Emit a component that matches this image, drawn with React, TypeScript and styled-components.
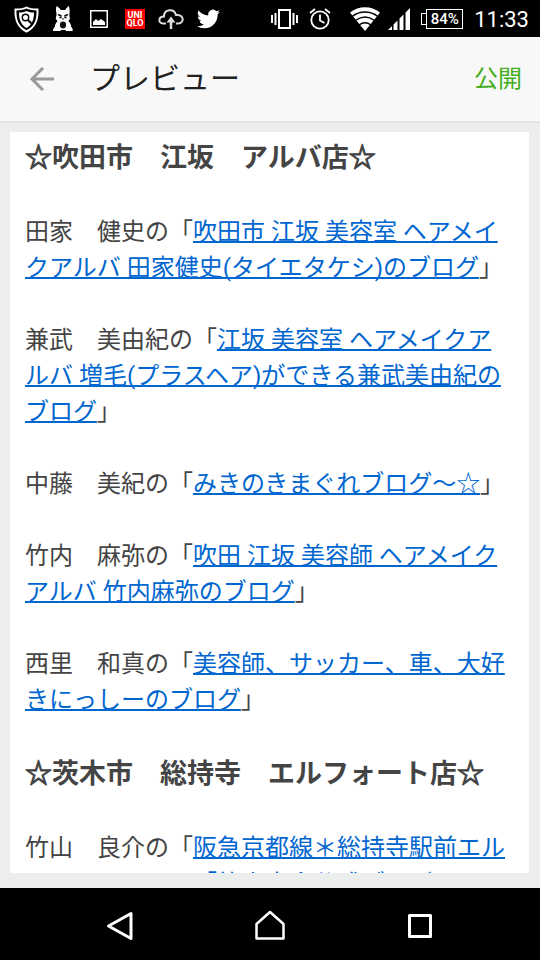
import React from 'react';
import styled, { createGlobalStyle } from 'styled-components';

const Global = createGlobalStyle`
  * { box-sizing: border-box; }
  body { margin: 0; background: #ebeeed; font-family: Roboto, "Noto Sans CJK JP", sans-serif; }
`;

const Screen = styled.div`
  display: flex;
  flex-direction: column;
  height: 100vh;
  background: #ebeeed;
`;

const StatusBar = styled.div`
  display: flex;
  flex: none;
  align-items: center;
  justify-content: space-between;
  height: 37px;
  padding: 0 11px 0 13px;
  background: #000;
  color: #fff;
`;

const Group = styled.div<{ $gap: number }>`
  display: flex;
  align-items: center;
  gap: ${(p) => p.$gap}px;
  svg { display: block; }
`;

const BrandTile = styled.span`
  width: 20px;
  height: 20px;
  padding-top: 2px;
  background: #f00;
  font: 700 9px/8px Roboto, sans-serif;
  text-align: center;
`;

const Battery = styled.span`
  display: flex;
  align-items: center;
  &::before {
    content: "";
    width: 4px;
    height: 10px;
    border: 1px solid #fff;
    border-right: 0;
  }
  span {
    width: 37px;
    height: 20px;
    border: 1px solid #fff;
    font: 500 15px/19px Roboto, sans-serif;
    text-align: center;
  }
`;

const Clock = styled.time`
  padding-top: 2px;
  font: 22px/26px Roboto, sans-serif;
`;

const AppBar = styled.header`
  display: flex;
  flex: none;
  align-items: center;
  height: 86px;
  padding: 0 18px 0 28px;
  background: #f8f8f8;
  border-bottom: 2px solid #e2e5e4;
`;

const Title = styled.h1`
  flex: 1;
  margin: 0 0 0 34px;
  font-size: 30px;
  font-weight: 400;
  line-height: 40px;
  color: #212121;
`;

const IconButton = styled.button`
  display: flex;
  padding: 0;
  border: 0;
  background: none;
  color: #999;
`;

const Publish = styled.button`
  padding: 0;
  border: 0;
  background: none;
  font: 24px/36px Roboto, "Noto Sans CJK JP", sans-serif;
  color: #43ae20;
`;

const Preview = styled.main`
  flex: 1;
  min-height: 0;
  overflow: hidden;
  margin: 9px 11px 15px 10px;
  padding: 6px 15px 0;
  background: #fff;
  color: #444;
`;

const ShopName = styled.h2`
  margin: 0 0 36px;
  font-size: 27px;
  font-weight: 700;
  line-height: 40px;
`;

const Star = styled.span`
  -webkit-text-stroke: 1px currentColor;
`;

const Entry = styled.p`
  margin: 0 0 36px;
  font-size: 24px;
  line-height: 36px;
  text-spacing-trim: space-all;
`;

const BlogLink = styled.a`
  color: #0066d0;
  text-decoration: underline;
  text-decoration-thickness: 2px;
  text-underline-offset: 1px;
  text-decoration-skip-ink: none;
`;

const NavBar = styled.nav`
  display: flex;
  flex: none;
  justify-content: center;
  align-items: center;
  gap: 118px;
  height: 72px;
  padding-top: 4px;
  background: #000;
`;

const NavButton = styled.button`
  display: flex;
  padding: 0;
  border: 0;
  background: none;
`;

const ShieldIcon = () => (
  <svg width="27" height="28" viewBox="0 0 27 28" fill="none" stroke="#fff">
    <path d="M13.500 2.500C10 4.500 6 4.500 2.500 4.500c-.5 10.500 2 17.500 11 22C22.500 22 25 15 24.500 4.500 21 4.500 17 4.500 13.500 2.500Z" strokeWidth="2" />
    <path d="M13.500 6c-2.500 1-4.500 1.500-7.500 1.500 0 7.500 2 12 7.500 15.500 5.500-3.500 7.500-8 7.500-15.500-3 0-5-.5-7.500-1.500Z" fill="#fff" stroke="none" />
    <circle cx="12.500" cy="12.500" r="3.200" stroke="#000" strokeWidth="1.400" />
    <path d="m15 15 3.500 3.500" stroke="#000" strokeWidth="2" />
  </svg>
);

const MascotIcon = () => (
  <svg width="20" height="26" viewBox="0 0 22 26" preserveAspectRatio="none">
    <path d="M4 0c2 1 4 3 4.500 4h5C14 3 15.500 1 17.500 0c1 3 1 6 .5 8l.5 5-1.500 2c2 2 3 4 3 6 1.500 1 2 2.500 1.500 4h-7l-1-1H9l-1 1H0c0-2 .5-3 2-4 0-2 1-4 3-6l-2-2 1-5C3 5 3 2 4 0Z" fill="#fff" />
    <path d="M5.500 8.500l4 1.500M16.500 8.500l-4 1.500M7 11.500h2.500M12.500 11.500H15" stroke="#111" strokeWidth="1.600" />
    <path d="M9.500 12.500h3L11 14Z" fill="#111" />
    <circle cx="11" cy="19" r="3.400" fill="#111" />
  </svg>
);

const ImageIcon = () => (
  <svg width="18" height="18" viewBox="0 0 18 18">
    <path d="M.75.750h16.500v16.500H.750Z" fill="none" stroke="#fff" strokeWidth="1.500" />
    <path d="M3 15v-3l3-3 2 2 3-2 4 3v3Z" fill="#fff" />
  </svg>
);

const CloudIcon = () => (
  <svg width="26" height="20" viewBox="0 0 26 20" fill="none" stroke="#ddd" strokeWidth="2">
    <path d="M8 14.500H5c-5 0-5-7 1-7C6 0 16-1 18 6c8-1 9 8 2 8.500h-2" />
    <path d="M13 20v-9" strokeWidth="2.500" />
    <path d="m8.500 13.500 4.500-6 4.500 6Z" fill="#ddd" stroke="none" />
  </svg>
);

const BirdIcon = () => (
  <svg width="23" height="20" viewBox="0 2 24 20" fill="#fff">
    <path d="M23.950 4.570a10 10 0 0 1-2.820.770 4.960 4.960 0 0 0 2.160-2.720c-.95.560-2 .960-3.130 1.190a4.920 4.920 0 0 0-8.380 4.480C7.690 8.100 4.070 6.130 1.640 3.160a4.920 4.920 0 0 0 1.520 6.570 4.900 4.900 0 0 1-2.230-.610v.060a4.920 4.920 0 0 0 3.950 4.830 5 5 0 0 1-2.210.080 4.940 4.940 0 0 0 4.600 3.420A9.870 9.870 0 0 1 0 19.540a13.990 13.990 0 0 0 7.550 2.210c9.050 0 14-7.500 14-13.980l-.02-.63a9.940 9.940 0 0 0 2.420-2.570Z" />
  </svg>
);

const VibrateIcon = () => (
  <svg width="27" height="22" viewBox="0 0 27 22" fill="none" stroke="#fff" strokeWidth="2">
    <path d="M8 2h11v18H8ZM1 7v8M4.500 5v12M22.500 5v12M26 7v8" />
  </svg>
);

const AlarmIcon = () => (
  <svg width="22" height="22" viewBox="0 0 22 22" fill="none" stroke="#fff" strokeWidth="1.800">
    <circle cx="11" cy="12" r="8.700" />
    <path d="M11 6.500v6l4.500 2.500M1 5l5-4M21 5l-5-4" />
  </svg>
);

const WifiIcon = () => (
  <svg width="30" height="24" viewBox="0 0 30 24">
    <path d="M0 5.500C9-1.500 21-1.500 30 5.500L15 24Z" fill="#fff" />
    <path d="M2 9.500c8-6 18-6 26 0M5.500 13.500c6-4.500 13-4.500 19 0M9 18c4-3 8-3 12 0" fill="none" stroke="#000" strokeWidth="1.500" />
  </svg>
);

const SignalIcon = () => (
  <svg width="22" height="22" viewBox="0 0 22 22" fill="#fff">
    <path d="M0 22l4-4v4ZM5.500 16.500l4-4V22h-4ZM11.500 10.500l4-4V22h-4ZM17.500 4.500 22 0v22h-4.500Z" />
  </svg>
);

type Blog = { writer: string; title: string };
type Shop = { name: string; blogs: Blog[] };

const shops: Shop[] = [
  {
    name: '吹田市　江坂　アルバ店',
    blogs: [
      { writer: '田家　健史', title: '吹田市 江坂 美容室 ヘアメイクアルバ 田家健史(タイエタケシ)のブログ' },
      { writer: '兼武　美由紀', title: '江坂 美容室 ヘアメイクアルバ 増毛(プラスヘア)ができる兼武美由紀のブログ' },
      { writer: '中藤　美紀', title: 'みきのきまぐれブログ〜☆' },
      { writer: '竹内　麻弥', title: '吹田 江坂 美容師 ヘアメイクアルバ 竹内麻弥のブログ' },
      { writer: '西里　和真', title: '美容師、サッカー、車、大好きにっしーのブログ' },
    ],
  },
  {
    name: '茨木市　総持寺　エルフォート店',
    blogs: [{ writer: '竹山　良介', title: '阪急京都線＊総持寺駅前エルフォートのヘア「竹山良介公式ブログ」' }],
  },
];

export default function App() {
  return (
    <Screen lang="ja">
      <Global />
      <StatusBar>
        <Group $gap={13}>
          <ShieldIcon />
          <Group $gap={17}>
            <MascotIcon />
            <ImageIcon />
            <BrandTile>UNI<br />QLO</BrandTile>
          </Group>
          <CloudIcon />
          <BirdIcon />
        </Group>
        <Group $gap={11}>
          <Group $gap={19}>
            <Group $gap={11}>
              <VibrateIcon />
              <AlarmIcon />
            </Group>
            <Group $gap={8}>
              <WifiIcon />
              <SignalIcon />
            </Group>
          </Group>
          <Battery><span>84%</span></Battery>
          <Clock>11:33</Clock>
        </Group>
      </StatusBar>
      <AppBar>
        <IconButton aria-label="戻る">
          <svg width="28" height="24" viewBox="0 0 28 24" fill="none" stroke="currentColor" strokeWidth="3">
            <path d="M26 12H4M15 1 4 12l11 11" />
          </svg>
        </IconButton>
        <Title>プレビュー</Title>
        <Publish>公開</Publish>
      </AppBar>
      <Preview>
        {shops.map((shop) => (
          <section key={shop.name}>
            <ShopName>
              <Star>☆</Star>{shop.name}<Star>☆</Star>
            </ShopName>
            {shop.blogs.map((blog) => (
              <Entry key={blog.writer}>
                {`${blog.writer}の「`}<BlogLink href="#">{blog.title}</BlogLink>」
              </Entry>
            ))}
          </section>
        ))}
      </Preview>
      <NavBar>
        <NavButton aria-label="戻る">
          <svg width="32" height="32" viewBox="0 0 32 32" fill="none" stroke="#fff" strokeWidth="3" strokeLinejoin="round">
            <path d="M27 3.500v25L4.500 16Z" />
          </svg>
        </NavButton>
        <NavButton aria-label="ホーム">
          <svg width="32" height="32" viewBox="0 0 32 32" fill="none" stroke="#fff" strokeWidth="2.500" strokeLinejoin="round">
            <path d="M2.500 28.500V14L16 2l13.500 12v14.500Z" />
          </svg>
        </NavButton>
        <NavButton aria-label="履歴">
          <svg width="32" height="32" viewBox="0 0 32 32" fill="none" stroke="#fff" strokeWidth="3" strokeLinejoin="round">
            <path d="M5.500 5.500h21v21h-21Z" />
          </svg>
        </NavButton>
      </NavBar>
    </Screen>
  );
}
